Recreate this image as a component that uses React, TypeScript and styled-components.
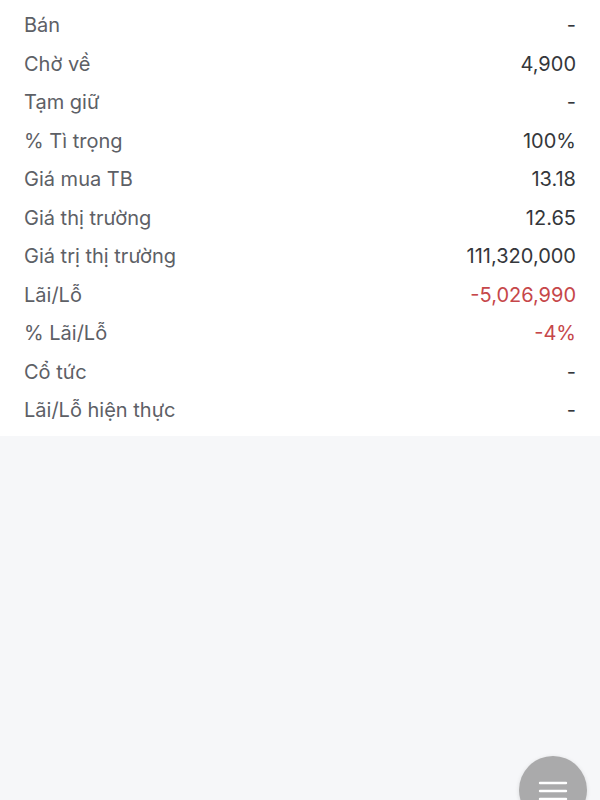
import React from "react";
import styled, { createGlobalStyle } from "styled-components";

const Global = createGlobalStyle`
  html, body { margin: 0; padding: 0; background: #f6f7f9; }
  body { font-family: Inter, "Noto Sans", sans-serif; -webkit-font-smoothing: antialiased; }
`;

const Page = styled.div`
  width: 600px;
  height: 800px;
  background: #f6f7f9;
  position: relative;
  overflow: hidden;
`;

const Card = styled.div`
  background: #ffffff;
  padding: 6px 24px 6px 24px;
  display: flex;
  flex-direction: column;
`;

const Row = styled.div`
  height: 38.5px;
  display: flex;
  align-items: center;
  justify-content: space-between;
  font-size: 20px;
  letter-spacing: 0;
`;

const Label = styled.span`
  color: #5d6066;
`;

const Value = styled.span<{ $tone?: "neg" | "normal" }>`
  color: ${(p) => (p.$tone === "neg" ? "#c6474a" : "#35373b")};
`;

const Fab = styled.button`
  position: absolute;
  left: 519px;
  top: 756px;
  width: 68px;
  height: 68px;
  border-radius: 50%;
  border: none;
  background: #aaaaab;
  padding: 0;
  display: flex;
  justify-content: center;
  padding-top: 25px;
  box-shadow: 0 1px 4px rgba(0, 0, 0, 0.12);
`;

const rows: { label: string; value: string; neg?: boolean }[] = [
  { label: "Bán", value: "-" },
  { label: "Chờ về", value: "4,900" },
  { label: "Tạm giữ", value: "-" },
  { label: "% Tì trọng", value: "100%" },
  { label: "Giá mua TB", value: "13.18" },
  { label: "Giá thị trường", value: "12.65" },
  { label: "Giá trị thị trường", value: "111,320,000" },
  { label: "Lãi/Lỗ", value: "-5,026,990", neg: true },
  { label: "% Lãi/Lỗ", value: "-4%", neg: true },
  { label: "Cổ tức", value: "-" },
  { label: "Lãi/Lỗ hiện thực", value: "-" },
];

export default function App() {
  return (
    <Page>
      <Global />
      <Card>
        {rows.map((r) => (
          <Row key={r.label}>
            <Label>{r.label}</Label>
            <Value $tone={r.neg ? "neg" : "normal"}>{r.value}</Value>
          </Row>
        ))}
      </Card>
      <Fab aria-label="menu">
        <svg width="30" height="24" viewBox="0 0 30 24">
          <g stroke="#ffffff" strokeWidth="2.4" strokeLinecap="round">
            <line x1="2" y1="2" x2="28" y2="2" />
            <line x1="2" y1="10" x2="28" y2="10" />
            <line x1="2" y1="18" x2="28" y2="18" />
          </g>
        </svg>
      </Fab>
    </Page>
  );
}
